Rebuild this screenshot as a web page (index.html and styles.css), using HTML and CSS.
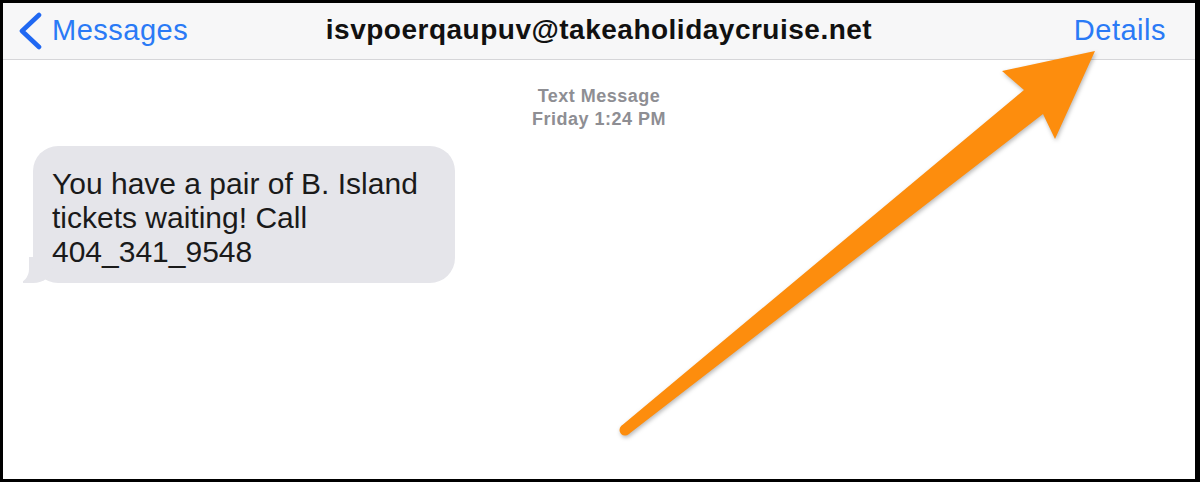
FILE: index.html
```html
<!DOCTYPE html>
<html>
<head>
<meta charset="utf-8">
<link rel="stylesheet" href="styles.css">
</head>
<body>
<div class="frame">
  <header class="navbar">
    <div class="nav-left">
      <svg class="chevron" width="26" height="38" viewBox="0 0 26 38"><path d="M22 3 L5 19 L22 35" fill="none" stroke="#2068f2" stroke-width="4.6" stroke-linecap="round" stroke-linejoin="round"/></svg>
      <span class="nav-link">Messages</span>
    </div>
    <div class="nav-title">isvpoerqaupuv@takeaholidaycruise.net</div>
    <div class="nav-right"><span class="nav-link">Details</span></div>
  </header>
  <main class="thread">
    <div class="stamp">
      <div>Text Message</div>
      <div>Friday 1:24 PM</div>
    </div>
    <div class="bubble">You have a pair of B. Island tickets waiting! Call 404_341_9548</div>
  </main>
</div>
<svg class="arrow" width="1200" height="482" viewBox="0 0 1200 482">
  <g fill="#fd8d0d">
    <circle cx="625" cy="430" r="5.5"/>
    <polygon points="621.5,425.7 1024,90 1002,71 1095,51 1055,139 1043,114 628.5,434.3"/>
  </g>
</svg>
</body>
</html>
```

FILE: styles.css
```css
html, body {
  margin: 0;
  padding: 0;
  background: #000;
}
body {
  width: 1200px;
  height: 482px;
  overflow: hidden;
  font-family: "Liberation Sans", Arial, sans-serif;
}
.frame {
  box-sizing: border-box;
  width: 1200px;
  height: 482px;
  border-style: solid;
  border-color: #000;
  border-width: 3px 5px 3px 3px;
  background: #fff;
  display: flex;
  flex-direction: column;
}
.navbar {
  box-sizing: border-box;
  height: 57px;
  flex: none;
  background: #f7f7f8;
  border-bottom: 1px solid #d6d6d9;
  display: grid;
  grid-template-columns: 1fr auto 1fr;
  align-items: center;
  padding: 0 22px 2px 22px;
}
.nav-left {
  display: flex;
  align-items: center;
  gap: 9px;
  margin-left: -8px;
}
.chevron {
  display: block;
  margin-top: 1px;
}
.nav-link {
  color: #2a7af6;
  font-size: 29px;
  letter-spacing: 0.5px;
  line-height: 34px;
}
.nav-title {
  color: #111;
  font-size: 28px;
  font-weight: bold;
  letter-spacing: 0.5px;
  line-height: 34px;
}
.nav-right {
  text-align: right;
  margin-right: 7px;
}
.thread {
  flex: 1;
  padding: 25px 0 0 30px;
}
.stamp {
  text-align: center;
  color: #8e8e93;
  font-size: 18px;
  font-weight: bold;
  letter-spacing: 0.5px;
  line-height: 23px;
  margin-left: -30px;
}
.bubble {
  position: relative;
  box-sizing: border-box;
  width: 422px;
  margin-top: 15px;
  padding: 21px 20px 14px 19px;
  background: #e5e5ea;
  border-radius: 25px;
  color: #1a1a1a;
  font-size: 30px;
  line-height: 34px;
}
.bubble::before {
  content: "";
  position: absolute;
  bottom: 0;
  left: -10px;
  width: 30px;
  height: 26px;
  background: #e5e5ea;
  border-bottom-right-radius: 20px 16px;
}
.bubble::after {
  content: "";
  position: absolute;
  bottom: 0;
  left: -22px;
  width: 18px;
  height: 26px;
  background: #fff;
  border-bottom-right-radius: 12px 14px;
}
.arrow {
  position: absolute;
  top: 0;
  left: 0;
  pointer-events: none;
  filter: drop-shadow(1px 2px 2px rgba(0,0,0,0.28));
}
```
